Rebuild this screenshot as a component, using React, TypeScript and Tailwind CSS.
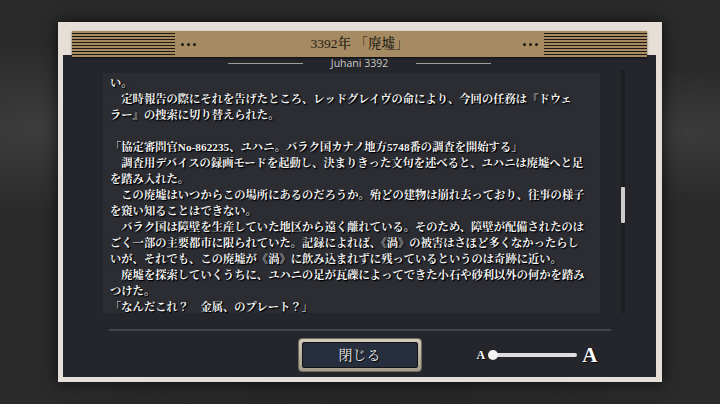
const SERIF = "font-['Liberation_Serif','Noto_Serif_CJK_JP','Noto_Sans_CJK_JP',serif]";

const LINES = [
  "い。",
  "　定時報告の際にそれを告げたところ、レッドグレイヴの命により、今回の任務は『ドウェ",
  "ラー』の捜索に切り替えられた。",
  "",
  "「協定審問官No-862235、ユハニ。バラク国カナノ地方5748番の調査を開始する」",
  "　調査用デバイスの録画モードを起動し、決まりきった文句を述べると、ユハニは廃墟へと足",
  "を踏み入れた。",
  "　この廃墟はいつからこの場所にあるのだろうか。殆どの建物は崩れ去っており、往事の様子",
  "を窺い知ることはできない。",
  "　バラク国は障壁を生産していた地区から遠く離れている。そのため、障壁が配備されたのは",
  "ごく一部の主要都市に限られていた。記録によれば、《渦》の被害はさほど多くなかったらし",
  "いが、それでも、この廃墟が《渦》に飲み込まれずに残っているというのは奇跡に近い。",
  "　廃墟を探索していくうちに、ユハニの足が瓦礫によってできた小石や砂利以外の何かを踏み",
  "つけた。",
  "「なんだこれ？　金属、のプレート？」",
];

function Stripes() {
  return (
    <div className="h-[23px] w-[103px] self-center bg-[repeating-linear-gradient(to_bottom,#1e1912_0px,#1e1912_1.3px,transparent_1.3px,transparent_3px)]" />
  );
}

function Dots() {
  return (
    <div className="flex items-center gap-[3px] px-[6px]">
      <span className="h-[3px] w-[3px] rounded-full bg-[#1e1912]" />
      <span className="h-[3px] w-[3px] rounded-full bg-[#1e1912]" />
      <span className="h-[3px] w-[3px] rounded-full bg-[#1e1912]" />
    </div>
  );
}

export default function App() {
  return (
    <div className="flex h-[404px] w-[720px] items-start justify-center overflow-hidden bg-[#2a2a2a] bg-[radial-gradient(ellipse_at_6%_32%,#3d3d3d_0%,transparent_22%),radial-gradient(ellipse_at_96%_33%,#3b3b3b_0%,transparent_18%),radial-gradient(ellipse_at_50%_100%,#262626_0%,transparent_60%)] pt-[22px]">
      {/* 枠 */}
      <div className="flex h-[360px] w-[604px] flex-col bg-[#e5dfd8] pt-[9px] pr-[6px] pb-[5px] pl-[5px] shadow-[0_0_14px_rgba(0,0,0,0.7)]">
        {/* タイトル */}
        <div className="relative z-10 mx-[9px] flex h-[26px] items-stretch bg-[#a68b62] shadow-[0_1px_2px_rgba(0,0,0,0.6)]">
          <Stripes />
          <Dots />
          <div
            className={`flex-1 text-center text-[13.5px] leading-[26px] font-medium text-[#1c1914] ${SERIF}`}>
            3392年 「廃墟」
          </div>
          <Dots />
          <Stripes />
        </div>

        {/* 本体 */}
        <div className="-mt-[2px] flex flex-1 flex-col bg-[#25262b] pt-[2px]">
          <div className="flex h-[12px] items-center justify-center gap-[28px]">
            <div className="h-px w-[75px] bg-[#9d9d9d]" />
            <span className="font-['Open_Sans',sans-serif] text-[10.5px] leading-none text-[#c8c8c8]">
              Juhani 3392
            </span>
            <div className="h-px w-[75px] bg-[#9d9d9d]" />
          </div>

          <div className="mt-[4px] flex pl-[40px]">
            <div
              className={`h-[240px] w-[497px] overflow-hidden bg-[#2c2d33] pt-[2px] pl-[7px] text-[11.3px] leading-[16px] font-bold whitespace-pre text-[#f5f5f5] [text-shadow:1px_1px_0_#000,1px_1px_2px_#000] ${SERIF}`}>
              {LINES.map((l, i) => (
                <div key={i} className="h-[16px]">
                  {l}
                </div>
              ))}
            </div>
            <div className="-mt-[3px] ml-[21px] h-[243px] w-[4px] bg-[#1c1d21]">
              <div className="mt-[117px] h-[36px] w-[4px] rounded-[1px] bg-[#cdcdcd]" />
            </div>
          </div>

          <div className="mt-[16px] ml-[46px] h-[2px] w-[502px] bg-[#43464b]" />

          <div className="mt-[7px] grid grid-cols-[1fr_auto_1fr] items-center">
            <div />
            <button
              type="button"
              className="h-[34px] w-[124px] rounded-[4px] border border-[#6f6a5f] bg-[linear-gradient(to_bottom,#d3cbb9,#a59c89)] p-[3px]">
              <div
                className={`flex h-full w-full items-center justify-center rounded-[2px] border border-[#121419] bg-[#272e3d] text-[14px] text-[#ececec] [text-shadow:1px_1px_1px_#000] ${SERIF}`}>
                閉じる
              </div>
            </button>
            <div className="flex items-center pl-[55px]">
              <span
                className={`text-[12px] leading-none font-bold text-white [text-shadow:1px_1px_1px_#000] ${SERIF}`}>
                A
              </span>
              <div className="relative ml-[3px] flex h-[10px] w-[89px] items-center">
                <div className="ml-[5px] h-[4px] flex-1 rounded-full bg-[#dedede]" />
                <div className="absolute top-0 left-0 h-[10px] w-[10px] rounded-full bg-[#f2f2f2]" />
              </div>
              <span
                className={`ml-[5px] text-[21px] leading-none font-bold text-white [text-shadow:1px_1px_1px_#000] ${SERIF}`}>
                A
              </span>
            </div>
          </div>
        </div>
      </div>
    </div>
  );
}
